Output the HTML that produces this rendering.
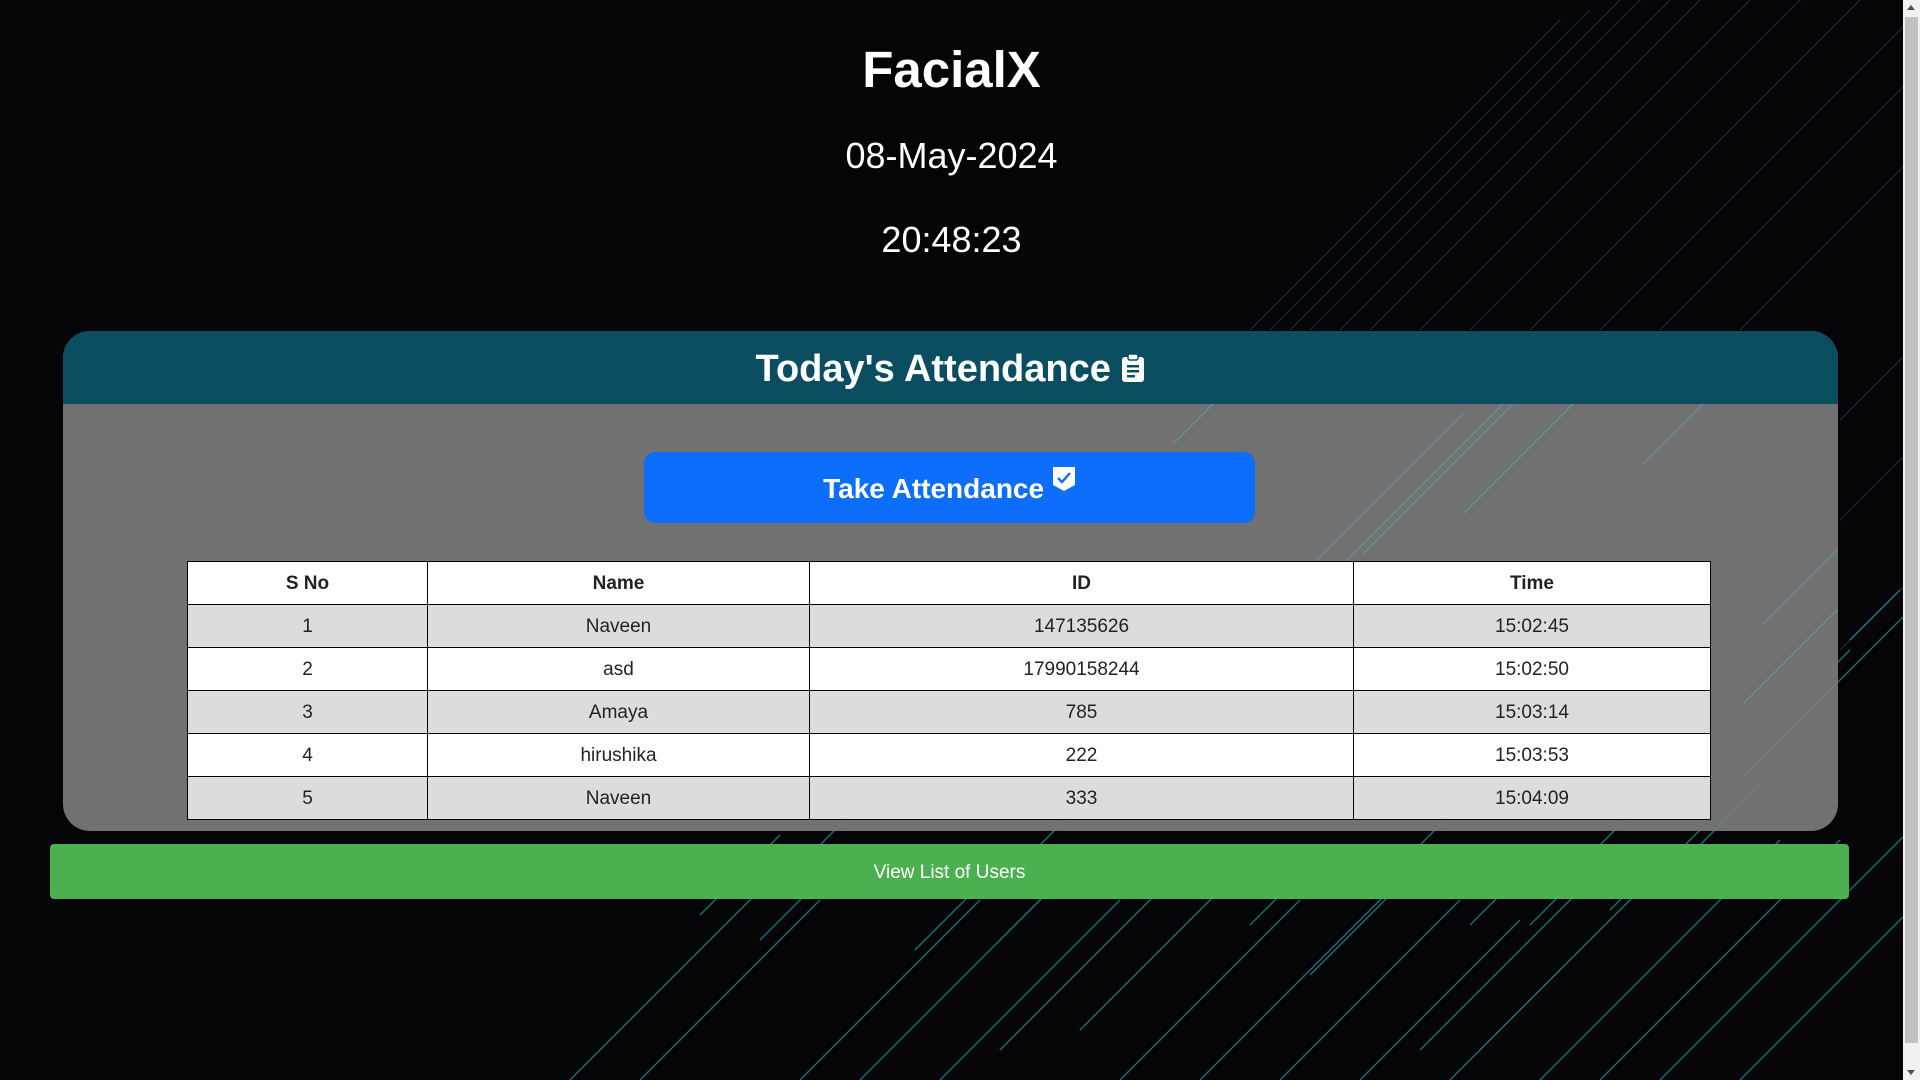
<!DOCTYPE html>
<html><head><meta charset="utf-8">
<style>
html,body{margin:0;padding:0;width:1920px;height:1080px;overflow:hidden;background:#050508;font-family:"Liberation Sans",sans-serif;}
#bg{position:absolute;left:0;top:0;width:1903px;height:1080px;}
.sb{position:absolute;right:0;top:0;width:17px;height:1080px;background:#f1f1f1;}
.sb .t{position:absolute;left:2px;width:13px;top:17px;height:1026px;background:#c1c1c1;}
.sb .a1{position:absolute;left:4px;top:5px;width:0;height:0;border-left:4px solid transparent;border-right:4px solid transparent;border-bottom:5px solid #505050;}
.sb .a2{position:absolute;left:4px;bottom:5px;width:0;height:0;border-left:4px solid transparent;border-right:4px solid transparent;border-top:5px solid #505050;}
.c{position:absolute;left:0;width:1903px;text-align:center;color:#fff;}
h1{margin:0;font-size:51px;font-weight:bold;top:40px;}
.d{font-size:36px;top:135px;}
.tm{font-size:36px;top:219px;}
.card{position:absolute;left:63px;top:331px;width:1775px;height:500px;border-radius:27px;overflow:hidden;background:rgba(125,125,125,0.9);}
.hd{height:73px;background:#0b4d60;color:#fff;text-align:center;font-size:38px;font-weight:bold;line-height:76px;}
.btn{position:absolute;left:581px;top:121px;width:611px;height:71px;background:#0d6efd;border-radius:11px;color:#fff;text-align:center;font-size:28px;font-weight:bold;line-height:74px;}
table{position:absolute;left:124px;top:230px;width:1524px;border-collapse:collapse;font-size:19px;color:#222;}
td,th{border:1.5px solid #000;text-align:center;height:40px;padding:0;padding-top:2px;}
th{background:#fff;font-weight:bold;}
tr.o td{background:#dcdcdc;}
tr.e td{background:#fff;}
.g{position:absolute;left:50px;top:844px;width:1799px;height:55px;background:#4caf50;border-radius:4px;color:#fff;text-align:center;line-height:57px;font-size:19px;}
</style></head><body>
<svg id="bg" viewBox="0 0 1903 1080">
<g stroke="#1b3a55" stroke-width="1.2" opacity="0.7">
<line x1="1250" y1="330" x2="1560" y2="20"/><line x1="1270" y1="330" x2="1590" y2="10"/><line x1="1290" y1="330" x2="1620" y2="0"/>
<line x1="1310" y1="330" x2="1640" y2="0"/><line x1="1340" y1="330" x2="1670" y2="0"/><line x1="1370" y1="330" x2="1700" y2="0"/>
<line x1="1420" y1="330" x2="1750" y2="0"/><line x1="1470" y1="330" x2="1800" y2="0"/><line x1="1530" y1="330" x2="1860" y2="0"/>
<line x1="1600" y1="330" x2="1903" y2="27"/><line x1="1660" y1="330" x2="1903" y2="87"/><line x1="1740" y1="330" x2="1903" y2="167"/>
<line x1="1840" y1="420" x2="1903" y2="357"/><line x1="1840" y1="520" x2="1903" y2="457"/><line x1="1840" y1="650" x2="1903" y2="587"/>
</g>
<g stroke="#23b8c4" stroke-width="1.4" opacity="0.6">
<line x1="1850" y1="640" x2="1900" y2="590"/><line x1="1740" y1="780" x2="1903" y2="617"/><line x1="1730" y1="770" x2="1850" y2="650"/>
<line x1="700" y1="915" x2="780" y2="835"/><line x1="760" y1="940" x2="850" y2="850"/><line x1="915" y1="950" x2="1020" y2="845"/>
<line x1="1000" y1="940" x2="1060" y2="880"/><line x1="1250" y1="925" x2="1300" y2="875"/><line x1="1310" y1="975" x2="1400" y2="885"/>
<line x1="1470" y1="925" x2="1530" y2="865"/><line x1="1530" y1="925" x2="1580" y2="875"/><line x1="1610" y1="910" x2="1660" y2="860"/>
<line x1="1000" y1="1050" x2="1160" y2="890"/><line x1="1080" y1="1030" x2="1230" y2="880"/><line x1="1200" y1="1080" x2="1400" y2="880"/>
<line x1="1420" y1="1050" x2="1600" y2="870"/><line x1="1450" y1="1080" x2="1700" y2="830"/><line x1="1540" y1="1080" x2="1780" y2="840"/>
<line x1="1600" y1="1080" x2="1840" y2="840"/><line x1="1660" y1="1080" x2="1903" y2="837"/><line x1="1740" y1="1080" x2="1903" y2="917"/>
<line x1="570" y1="1080" x2="760" y2="890"/><line x1="640" y1="1080" x2="820" y2="900"/><line x1="800" y1="1080" x2="980" y2="900"/>
<line x1="860" y1="1080" x2="1060" y2="880"/><line x1="940" y1="1080" x2="1120" y2="900"/><line x1="1120" y1="1080" x2="1300" y2="900"/>
<line x1="1280" y1="1080" x2="1460" y2="900"/><line x1="1360" y1="1080" x2="1520" y2="920"/><line x1="1480" y1="1050" x2="1560" y2="970"/>
<line x1="820" y1="845" x2="860" y2="805"/><line x1="1040" y1="845" x2="1090" y2="795"/><line x1="1420" y1="845" x2="1470" y2="795"/>
<line x1="1600" y1="845" x2="1650" y2="795"/><line x1="1700" y1="845" x2="1760" y2="785"/>
</g>
</svg>
<div class="sb"><div class="a1"></div><div class="t"></div><div class="a2"></div></div>
<h1 class="c">FacialX</h1>
<div class="c d">08-May-2024</div>
<div class="c tm">20:48:23</div>
<div class="card">
<svg style="position:absolute;left:0;top:73px" width="1775" height="427"><g stroke="#4fc3d0" stroke-width="1.2" opacity="0.45">
<line x1="1250" y1="160" x2="1400" y2="10"/><line x1="1270" y1="170" x2="1440" y2="0"/><line x1="1300" y1="150" x2="1450" y2="0"/>
<line x1="1400" y1="110" x2="1510" y2="0"/><line x1="1580" y1="60" x2="1640" y2="0"/><line x1="1680" y1="300" x2="1775" y2="205"/>
<line x1="1700" y1="220" x2="1775" y2="145"/><line x1="1110" y1="40" x2="1150" y2="0"/></g></svg>
<div class="hd">Today's Attendance <svg width="24" height="30" viewBox="0 0 24 30" style="vertical-align:-2px"><rect x="1" y="4" width="22" height="25" rx="3" fill="#fff"/><rect x="7" y="1" width="10" height="6" rx="2" fill="#fff" stroke="#0b4d60" stroke-width="1.5"/><rect x="6" y="12" width="12" height="2.5" fill="#0b4d60"/><rect x="6" y="17" width="12" height="2.5" fill="#0b4d60"/><rect x="6" y="22" width="8" height="2.5" fill="#0b4d60"/></svg></div>
<div class="btn">Take Attendance <svg width="24" height="26" viewBox="0 0 24 26" style="vertical-align:6px"><path d="M1 1H23V19L12 25L1 19Z" fill="#fff"/><path d="M6 12L10 16L18 7" fill="none" stroke="#0d6efd" stroke-width="2.4"/></svg></div>
<table>
<tr><th style="width:239px">S No</th><th style="width:381px">Name</th><th style="width:543px">ID</th><th>Time</th></tr>
<tr class="o"><td>1</td><td>Naveen</td><td>147135626</td><td>15:02:45</td></tr>
<tr class="e"><td>2</td><td>asd</td><td>17990158244</td><td>15:02:50</td></tr>
<tr class="o"><td>3</td><td>Amaya</td><td>785</td><td>15:03:14</td></tr>
<tr class="e"><td>4</td><td>hirushika</td><td>222</td><td>15:03:53</td></tr>
<tr class="o"><td>5</td><td>Naveen</td><td>333</td><td>15:04:09</td></tr>
</table>
</div>
<div class="g">View List of Users</div>
</body></html>
